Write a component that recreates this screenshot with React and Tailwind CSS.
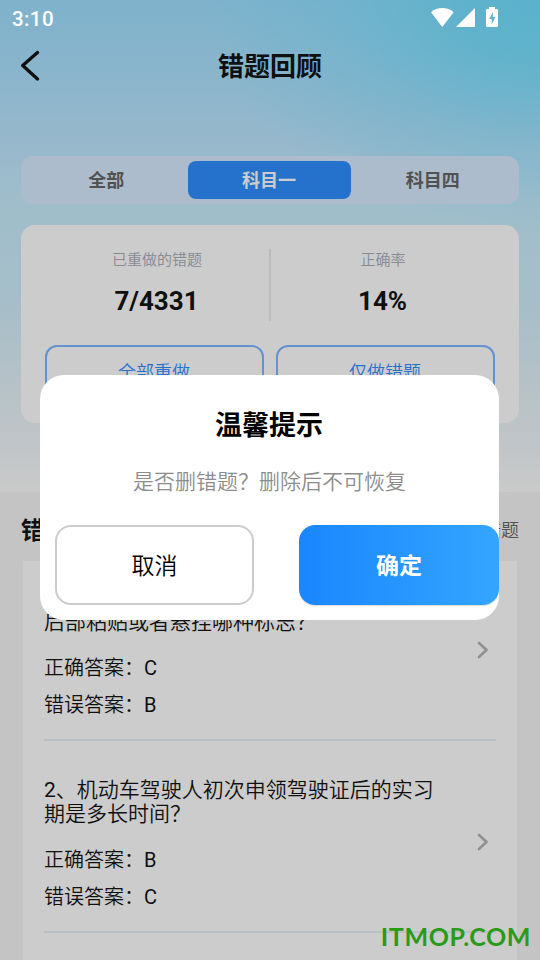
import React, { useState } from 'react';

const TABS = ['全部', '科目一', '科目四'];

const QUESTIONS = [
    { id: 1, title: '在实习期内驾驶机动车的，应当在车身后部粘贴或者悬挂哪种标志？', right: 'C', wrong: 'B' },
    { id: 2, title: '机动车驾驶人初次申领驾驶证后的实习期是多长时间？', right: 'B', wrong: 'C' },
];

function StatusBar() {
    return (
        <div className="absolute inset-x-0 top-0 z-20 flex h-9 items-center justify-between pl-3 pr-[41px] text-white">
            <span className="mt-[2px] text-[20.500px] font-medium leading-6 tracking-[0.4px]">3:10</span>
            <svg width="69" height="22" viewBox="0 0 69 22" fill="currentColor" className="mt-[-2px]">
                <path d="M1 6.200C4.400 3.200 8 2 12.300 2s8 1.200 11.300 4.200L12.300 21z" />
                <path d="M45 2v19H26z" />
                <path fillRule="evenodd" d="M59 1h6v2h2q1 0 1 1v16q0 1-1 1H57q-1 0-1-1V4q0-1 1-1h2zM62.800 6L59.300 13h2.400v5.500L65.500 11h-2.700z" />
            </svg>
        </div>
    );
}

function StatCell({ label, value }) {
    return (
        <div className="flex flex-1 flex-col items-center">
            <span className="mt-px text-[15px] leading-5 text-[#a7adb8]">{label}</span>
            <span className="mt-[15px] pr-px text-[26px] font-bold leading-8 text-[#141414]">{value}</span>
        </div>
    );
}

function QuestionRow({ item }) {
    return (
        <div className="flex h-[192px] items-start justify-between border-b-2 border-[#e9f0f5] pt-[37px] text-[#141414]">
            <div className="w-[400px]">
                <p className="text-[21px] leading-6">{item.id}、{item.title}</p>
                <p className="mt-[16px] text-[20px] leading-[37px]">正确答案：{item.right}</p>
                <p className="text-[20px] leading-[37px]">错误答案：{item.wrong}</p>
            </div>
            <svg width="12" height="18" viewBox="0 0 12 18" fill="none" stroke="#b5b5b5" strokeWidth="2.600" strokeLinecap="round" strokeLinejoin="round" className="mr-[7px] mt-[55px]">
                <path d="M2 2l7.500 7L2 16" />
            </svg>
        </div>
    );
}

function ConfirmDialog() {
    return (
        <div className="absolute inset-0 z-10 bg-[#000000]/20 pl-10 pt-[375px]">
            <div className="flex h-[245px] w-[459px] flex-col rounded-[24px] bg-white">
                <h2 className="mt-[31px] pr-px text-center font-[Roboto,'Noto_Sans_CJK_SC',sans-serif] text-[27px] font-bold leading-10 text-black">温馨提示</h2>
                <p className="mt-[20px] text-center text-[21px] leading-8 text-[#8c8c8c]">是否删错题？删除后不可恢复</p>
                <div className="mt-[27px] flex justify-between pl-[15px]">
                    <button className="h-20 w-[199px] rounded-[16px] border-2 border-[#cccccc] pt-[4px] text-[23px] text-black">取消</button>
                    <button className="h-20 w-[200px] rounded-[16px] bg-linear-[90deg,#1a86ff,#34a5ff] pt-[4px] font-[Roboto,'Noto_Sans_CJK_SC',sans-serif] text-[23px] font-bold text-white shadow-[0_1px_1px_rgba(0,0,0,0.15)]">确定</button>
                </div>
            </div>
        </div>
    );
}

export default function App() {
    const [tab, setTab] = useState('科目一');

    return (
        <div className="relative h-[960px] w-[540px] overflow-hidden bg-[#f5f5f5] font-[Roboto,'Noto_Sans_CJK_SC_DemiLight','Noto_Sans_CJK_SC',sans-serif]">
            <StatusBar />

            <div className="h-[492px] bg-[radial-gradient(ellipse_330px_230px_at_100%_0%,#72dfff_0%,rgba(114,223,255,0.85)_25%,rgba(114,223,255,0.35)_60%,rgba(114,223,255,0)_100%),linear-gradient(180deg,#9fdfff_0px,#aae2ff_60px,#bde6ff_140px,#c8edfe_200px,#cfeefc_300px,#dcf0fa_350px,#e6f4fa_400px,#f2f7fa_450px,#fdfdfd_492px)] px-[21px] pt-[42px]">
                <div className="grid h-12 grid-cols-[60px_1fr_60px] items-center">
                    <svg width="20" height="32" viewBox="0 0 20 32" fill="none" stroke="#141414" strokeWidth="3.300" strokeLinecap="round" strokeLinejoin="round">
                        <path d="M16.500 2.500L1.700 15.500L16.500 29" />
                    </svg>
                    <h1 className="pt-[2px] text-center font-[Roboto,'Noto_Sans_CJK_SC',sans-serif] text-[26px] font-bold leading-9 text-[#141414]">错题回顾</h1>
                </div>

                <div className="mt-[66px] flex h-12 items-center rounded-[12px] bg-[#d9ebff] pl-[4px] pr-[5px] font-[Roboto,'Noto_Sans_CJK_SC',sans-serif]">
                    {TABS.map((name) => (
                        <button
                            key={name}
                            onClick={() => setTab(name)}
                            className={tab === name
                                ? 'h-[38px] flex-1 rounded-[8px] bg-[#2f8fff] pr-px pt-px text-[18px] font-bold text-white'
                                : 'h-[38px] flex-1 pt-px text-[18px] font-bold text-[#666666]'}
                        >
                            {name}
                        </button>
                    ))}
                </div>

                <div className="mt-[21px] h-[198px] rounded-[14px] bg-white px-6 pt-6">
                    <div className="flex h-[72px]">
                        <StatCell label="已重做的错题" value="7/4331" />
                        <div className="w-[2px] bg-[#e6ebf0]" />
                        <StatCell label="正确率" value="14%" />
                    </div>
                    <div className="mt-6 flex gap-3">
                        <button className="h-[54px] flex-1 rounded-[12px] border-2 border-[#7cb8ff] pr-px pt-px text-[18px] text-[#2f8fff]">全部重做</button>
                        <button className="h-[54px] flex-1 rounded-[12px] border-2 border-[#7cb8ff] pr-px pt-px text-[18px] text-[#2f8fff]">仅做错题</button>
                    </div>
                </div>
            </div>

            <div className="flex h-[69px] items-center justify-between px-[21px] pt-[8px]">
                <span className="font-[Roboto,'Noto_Sans_CJK_SC',sans-serif] text-[24px] font-bold text-[#141414]">错题列表</span>
                <span className="text-[18px] text-[#666666]">删除错题</span>
            </div>

            <div className="mx-[23px] flow-root h-[420px] bg-white px-[21px]">
                <div className="-mt-[12px]">
                    {QUESTIONS.map((item) => <QuestionRow key={item.id} item={item} />)}
                </div>
            </div>

            <ConfirmDialog />

            <span className="absolute bottom-[8px] right-[9px] z-20 font-[Lato] text-[25px] font-bold leading-8 tracking-[0.6px] text-[#2a9a18]">ITMOP.COM</span>
        </div>
    );
}
